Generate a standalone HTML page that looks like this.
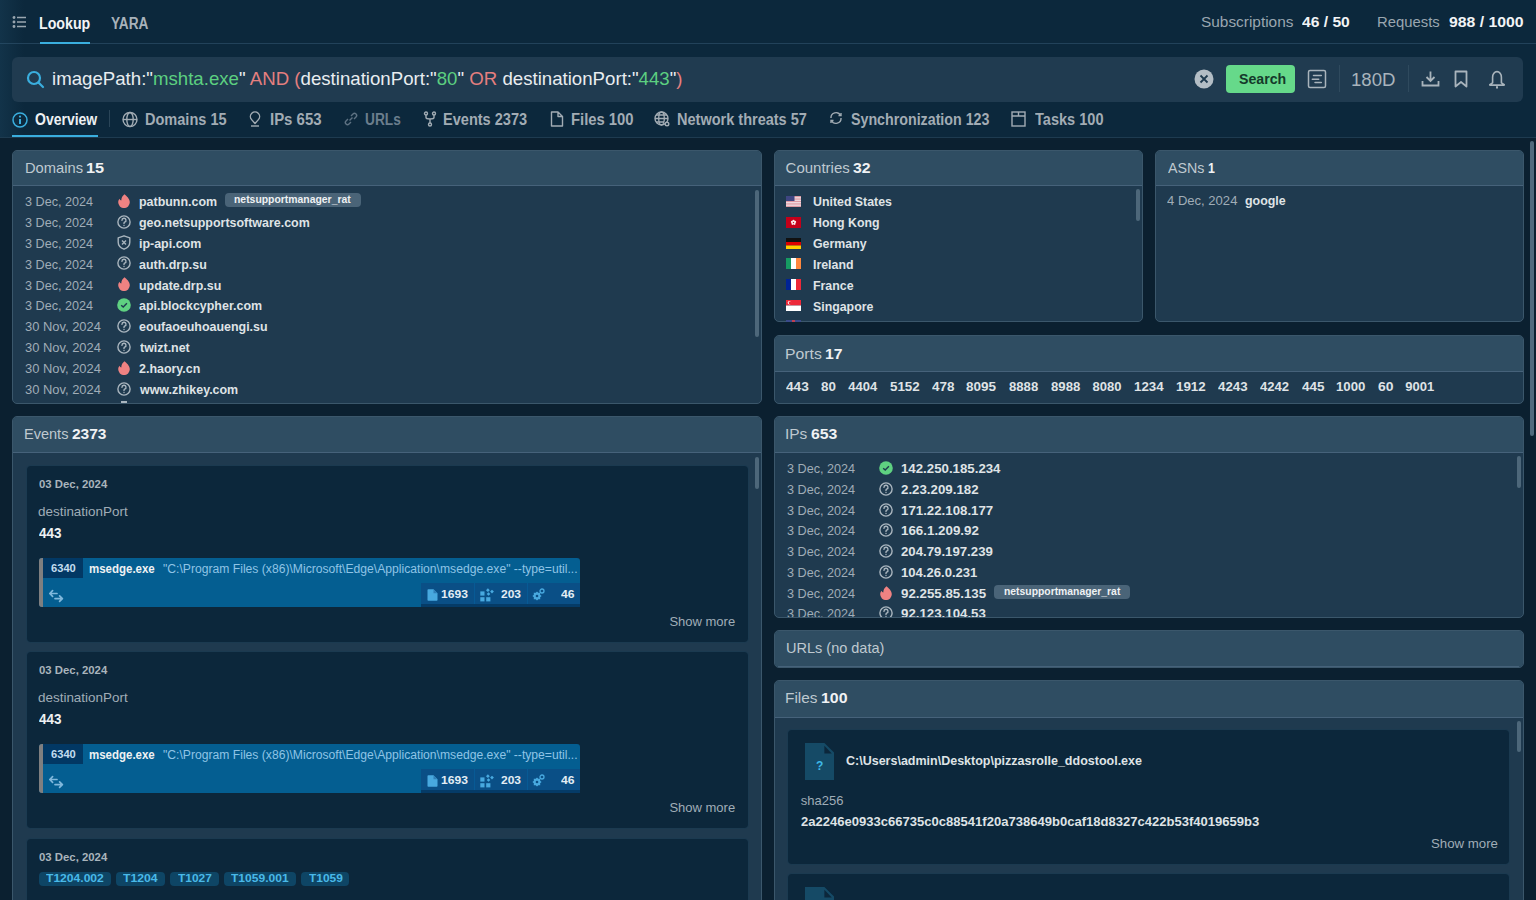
<!DOCTYPE html>
<html><head><meta charset="utf-8"><title>Lookup</title>
<style>
*{box-sizing:border-box;margin:0;padding:0}
html,body{width:1536px;height:900px;overflow:hidden;background:#0b2030;font-family:"Liberation Sans",sans-serif}
.t{position:absolute;white-space:nowrap;transform-origin:0 0}
.b{position:absolute}
.clip{position:absolute;overflow:hidden}
</style></head><body>
<div class="b" style="left:0px;top:0px;width:1536px;height:43px;background:#0c283c;"></div>
<div class="b" style="left:0px;top:43px;width:1536px;height:1px;background:#22425a;"></div>
<div class="b" style="left:0px;top:44px;width:1536px;height:93px;background:#0c283c;"></div>
<div class="b" style="left:0px;top:137px;width:1536px;height:1px;background:#1e3b50;"></div>
<div class="b" style="left:0;top:0;width:24px;height:137px;background:linear-gradient(to right,rgba(40,90,120,0.22),rgba(40,90,120,0))"></div>
<svg class="b" style="left:12px;top:15px" width="16" height="14" viewBox="0 0 16 14" fill="none" stroke="#9aa6b0" stroke-width="1.3"><circle cx="2" cy="2.5" r="0.8" fill="#9aa6b0"/><circle cx="2" cy="7" r="0.8" fill="#9aa6b0"/><circle cx="2" cy="11.5" r="0.8" fill="#9aa6b0"/><path d="M5 2.5H14M5 7H14M5 11.5H14"/></svg>
<div class="t" style="left:38.68px;top:16.10px;font-size:16px;line-height:16px;color:#f2f4f6;font-weight:bold;transform:scaleX(0.8880);">Lookup</div>
<div class="b" style="left:40px;top:42px;width:50px;height:2px;background:#3aaede;"></div>
<div class="t" style="left:110.63px;top:16.10px;font-size:16px;line-height:16px;color:#a8b2ba;font-weight:bold;transform:scaleX(0.8534);">YARA</div>
<div class="t" style="left:1200.61px;top:13.80px;font-size:15px;line-height:15px;color:#9aa6b0;transform:scaleX(1.0262);">Subscriptions</div>
<div class="t" style="left:1302.37px;top:13.80px;font-size:15px;line-height:15px;color:#f2f4f6;font-weight:bold;transform:scaleX(1.0422);">46 / 50</div>
<div class="t" style="left:1376.81px;top:13.80px;font-size:15px;line-height:15px;color:#9aa6b0;transform:scaleX(0.9895);">Requests</div>
<div class="t" style="left:1448.95px;top:13.80px;font-size:15px;line-height:15px;color:#f2f4f6;font-weight:bold;transform:scaleX(1.0523);">988 / 1000</div>
<div class="b" style="left:12px;top:57px;width:1511px;height:45px;background:#203b50;border-radius:6px"></div>
<svg class="b" style="left:26px;top:70px" width="19" height="19" viewBox="0 0 19 19" fill="none" stroke="#3aaede" stroke-width="2.2" stroke-linecap="round"><circle cx="8" cy="8" r="6"/><path d="M12.5 12.5L17 17"/></svg>
<div class="t" style="left:52.29px;top:70.25px;font-size:18.5px;line-height:18.5px;color:#e9edf0;transform:scaleX(1.0079);"><span style="color:#e9edf0">imagePath:&quot;</span><span style="color:#5ccf80">mshta.exe</span><span style="color:#e9edf0">&quot; </span><span style="color:#e57f7f">AND (</span><span style="color:#e9edf0">destinationPort:&quot;</span><span style="color:#5ccf80">80</span><span style="color:#e9edf0">&quot; </span><span style="color:#e57f7f">OR</span><span style="color:#e9edf0"> destinationPort:&quot;</span><span style="color:#5ccf80">443</span><span style="color:#e9edf0">&quot;</span><span style="color:#e57f7f">)</span></div>
<svg class="b" style="left:1194px;top:69px" width="20" height="20" viewBox="0 0 20 20"><circle cx="10" cy="10" r="9.5" fill="#b3bdc5"/><path d="M6.5 6.5L13.5 13.5M13.5 6.5L6.5 13.5" stroke="#1f3a4f" stroke-width="1.8"/></svg>
<div class="b" style="left:1226px;top:65px;width:69px;height:28px;background:#66d98a;border-radius:4px"></div>
<div class="t" style="left:1238.57px;top:71.00px;font-size:15px;line-height:15px;color:#15392a;font-weight:bold;transform:scaleX(0.9450);">Search</div>
<svg class="b" style="left:1307px;top:69px" width="20" height="20" viewBox="0 0 20 20" fill="none" stroke="#a9b4bc" stroke-width="1.5" stroke-linecap="round"><rect x="1.5" y="1.6" width="17" height="17" rx="1.5"/><path d="M6.5 6.6H14.3M5.3 10.2H11.7M8 13.6H14.3"/></svg>
<div class="b" style="left:1339px;top:65px;width:1px;height:27px;background:#2f4a5e;"></div>
<div class="t" style="left:1351.01px;top:70.80px;font-size:18px;line-height:18px;color:#a9b4bc;transform:scaleX(1.0328);">180D</div>
<div class="b" style="left:1408px;top:65px;width:1px;height:27px;background:#2f4a5e;"></div>
<svg class="b" style="left:1421px;top:70px" width="19" height="18" viewBox="0 0 19 18" fill="none" stroke="#a9b4bc" stroke-width="1.8"><path d="M9.5 1.5V11M5.5 7L9.5 11L13.5 7M1.5 11V15.5H17.5V11"/></svg>
<svg class="b" style="left:1454px;top:70px" width="14" height="18" viewBox="0 0 14 18" fill="none" stroke="#a9b4bc" stroke-width="1.8"><path d="M1.5 1.5H12.5V16.5L7 12L1.5 16.5Z" stroke-linejoin="round"/></svg>
<svg class="b" style="left:1488px;top:70px" width="18" height="19" viewBox="0 0 18 19" fill="none" stroke="#a9b4bc" stroke-width="1.6" stroke-linejoin="round"><path d="M4.6 12.8V7.2A4.4 5.6 0 0 1 13.4 7.2V12.8L16.2 14.6V15.1H1.8V14.6Z"/><path d="M8 17.3H10" stroke-width="2.2"/></svg>
<svg class="b" style="left:12px;top:112px" width="16" height="16" viewBox="0 0 16 16" fill="none" stroke="#3aaede" stroke-width="1.5"><circle cx="8" cy="8" r="7"/><path d="M8 7V12" stroke-width="2"/><circle cx="8" cy="4.6" r="1.1" fill="#3aaede" stroke="none"/></svg>
<div class="t" style="left:34.94px;top:111.70px;font-size:16px;line-height:16px;color:#eef1f3;font-weight:bold;transform:scaleX(0.8744);">Overview</div>
<div class="b" style="left:12px;top:135px;width:86px;height:2px;background:#3aaede;"></div>
<div class="b" style="left:109px;top:110px;width:1px;height:17px;background:#2a4558;"></div>
<svg class="b" style="left:122px;top:111px" width="16" height="17" viewBox="0 0 16 17" fill="none" stroke="#a2acb4" stroke-width="1.4"><circle cx="8" cy="8.5" r="7"/><ellipse cx="8" cy="8.5" rx="3.2" ry="7"/><path d="M1 8.5H15"/></svg>
<div class="t" style="left:144.86px;top:111.90px;font-size:16px;line-height:16px;color:#a2acb4;font-weight:bold;transform:scaleX(0.9081);">Domains 15</div>
<svg class="b" style="left:249px;top:111px" width="16" height="17" viewBox="0 0 16 17" fill="none" stroke="#a2acb4" stroke-width="1.4"><path d="M6 12.5L2.6 8.6A4.6 4.6 0 1 1 9.4 8.6Z" stroke-linejoin="round"/><path d="M2 15H10"/></svg>
<div class="t" style="left:269.83px;top:111.90px;font-size:16px;line-height:16px;color:#a2acb4;font-weight:bold;transform:scaleX(0.9342);">IPs 653</div>
<svg class="b" style="left:343px;top:111px" width="16" height="17" viewBox="0 0 16 17" fill="none" stroke="#5e7283" stroke-width="1.4"><path d="M6.5 9.5L9.5 6.5M5 8L3 10A2.1 2.1 0 0 0 6 13L8 11M11 8L13 6A2.1 2.1 0 0 0 10 3L8 5"/></svg>
<div class="t" style="left:364.78px;top:111.90px;font-size:16px;line-height:16px;color:#6b7e8d;font-weight:bold;transform:scaleX(0.8566);">URLs</div>
<svg class="b" style="left:423px;top:111px" width="16" height="17" viewBox="0 0 16 17" fill="none" stroke="#a2acb4" stroke-width="1.4"><circle cx="3" cy="2.5" r="1.5"/><circle cx="11" cy="2.5" r="1.5"/><circle cx="7" cy="13.5" r="1.5"/><path d="M3 4V6.5Q3 8 7 8Q11 8 11 6.5V4M7 8V12"/></svg>
<div class="t" style="left:443.45px;top:111.90px;font-size:16px;line-height:16px;color:#a2acb4;font-weight:bold;transform:scaleX(0.9089);">Events 2373</div>
<svg class="b" style="left:550px;top:111px" width="16" height="17" viewBox="0 0 16 17" fill="none" stroke="#a2acb4" stroke-width="1.4"><path d="M1.5 1H8L12.5 5.5V15H1.5Z M8 1V5.5H12.5" stroke-linejoin="round"/></svg>
<div class="t" style="left:571.04px;top:111.90px;font-size:16px;line-height:16px;color:#a2acb4;font-weight:bold;transform:scaleX(0.9254);">Files 100</div>
<svg class="b" style="left:654px;top:111px" width="16" height="17" viewBox="0 0 16 17" fill="none" stroke="#a2acb4" stroke-width="1.4"><circle cx="7.5" cy="7.5" r="6.5"/><ellipse cx="7.5" cy="7.5" rx="2.8" ry="6.5"/><path d="M1 7.5H14M2 4H13M2 11H10"/><circle cx="13" cy="13" r="1.8" fill="#0c283c"/></svg>
<div class="t" style="left:676.76px;top:111.90px;font-size:16px;line-height:16px;color:#a2acb4;font-weight:bold;transform:scaleX(0.9071);">Network threats 57</div>
<svg class="b" style="left:829px;top:111px" width="16" height="17" viewBox="0 0 16 17" fill="none" stroke="#a2acb4" stroke-width="1.4"><path d="M2 7A5 5 0 0 1 11.5 4.5M12 7A5 5 0 0 1 2.5 9.5"/><path d="M9.5 4.5H12V2M4.5 9.5H2V12"/></svg>
<div class="t" style="left:851.07px;top:111.90px;font-size:16px;line-height:16px;color:#a2acb4;font-weight:bold;transform:scaleX(0.8896);">Synchronization 123</div>
<svg class="b" style="left:1011px;top:111px" width="16" height="17" viewBox="0 0 16 17" fill="none" stroke="#a2acb4" stroke-width="1.4"><rect x="1" y="1" width="13" height="14"/><path d="M1 5H14M7.5 1V5"/></svg>
<div class="t" style="left:1034.65px;top:111.90px;font-size:16px;line-height:16px;color:#a2acb4;font-weight:bold;transform:scaleX(0.9090);">Tasks 100</div>
<div class="b" style="left:12px;top:150px;width:750px;height:254px;background:#1f3a4f;border:1px solid #3b576b;border-radius:5px;overflow:hidden">
<div class="b" style="left:0;top:0;width:748px;height:34px;background:#2f4d62"></div>
<div class="b" style="left:0;top:34px;width:748px;height:1px;background:#46627a"></div>
</div>
<div class="t" style="left:24.52px;top:159.70px;font-size:15px;line-height:15px;color:#bfc9d0;transform:scaleX(0.9800);">Domains</div>
<div class="t" style="left:85.72px;top:159.70px;font-size:15px;line-height:15px;color:#f0f2f4;font-weight:bold;transform:scaleX(1.0862);">15</div>
<div class="clip" style="left:13px;top:186px;width:740px;height:217px">
</div>
<div class="t" style="left:25.10px;top:195.10px;font-size:13px;line-height:13px;color:#a0adb7;transform:scaleX(0.9702);">3 Dec, 2024</div>
<svg class="b" style="left:118.2px;top:193.9px" width="12" height="14" viewBox="0 0 12 14"><path d="M6.5 0.2C8.6 2 11.8 4.6 11.8 8.3A5.8 5.8 0 0 1 0.2 8.3C0.2 6.8 0.8 5.6 1.6 4.8C1.9 5.8 2.6 6.4 3.3 6.4C3.2 3.8 4.6 1.6 6.5 0.2Z" fill="#ef8282"/></svg>
<div class="t" style="left:138.89px;top:195.10px;font-size:13px;line-height:13px;color:#dfe3e6;font-weight:bold;transform:scaleX(0.9570);">patbunn.com</div>
<div class="t" style="left:25.10px;top:215.95px;font-size:13px;line-height:13px;color:#a0adb7;transform:scaleX(0.9702);">3 Dec, 2024</div>
<svg class="b" style="left:117.2px;top:214.8px" width="14" height="14" viewBox="0 0 14 14" fill="none" stroke="#a9b5be" stroke-width="1.4"><circle cx="7" cy="7" r="6.1"/><path d="M5 5.4A2 2 0 1 1 7.6 7.2C7.1 7.5 7 7.8 7 8.6" stroke-linecap="round"/><circle cx="7" cy="10.5" r="0.7" fill="#a9b5be" stroke="none"/></svg>
<div class="t" style="left:139.20px;top:215.95px;font-size:13px;line-height:13px;color:#dfe3e6;font-weight:bold;transform:scaleX(0.9570);">geo.netsupportsoftware.com</div>
<div class="t" style="left:25.10px;top:236.80px;font-size:13px;line-height:13px;color:#a0adb7;transform:scaleX(0.9702);">3 Dec, 2024</div>
<svg class="b" style="left:117.2px;top:235.1px" width="14" height="15" viewBox="0 0 14 15" fill="none" stroke="#a9b5be" stroke-width="1.4"><path d="M7 0.8L12.8 2.8V7.2C12.8 10.6 10.4 12.8 7 14.2C3.6 12.8 1.2 10.6 1.2 7.2V2.8Z" stroke-linejoin="round"/><path d="M5 5.5L9 9.5M9 5.5L5 9.5"/></svg>
<div class="t" style="left:138.83px;top:236.80px;font-size:13px;line-height:13px;color:#dfe3e6;font-weight:bold;transform:scaleX(0.9570);">ip-api.com</div>
<div class="t" style="left:25.10px;top:257.65px;font-size:13px;line-height:13px;color:#a0adb7;transform:scaleX(0.9702);">3 Dec, 2024</div>
<svg class="b" style="left:117.2px;top:256.4px" width="14" height="14" viewBox="0 0 14 14" fill="none" stroke="#a9b5be" stroke-width="1.4"><circle cx="7" cy="7" r="6.1"/><path d="M5 5.4A2 2 0 1 1 7.6 7.2C7.1 7.5 7 7.8 7 8.6" stroke-linecap="round"/><circle cx="7" cy="10.5" r="0.7" fill="#a9b5be" stroke="none"/></svg>
<div class="t" style="left:139.33px;top:257.65px;font-size:13px;line-height:13px;color:#dfe3e6;font-weight:bold;transform:scaleX(0.9570);">auth.drp.su</div>
<div class="t" style="left:25.10px;top:278.50px;font-size:13px;line-height:13px;color:#a0adb7;transform:scaleX(0.9702);">3 Dec, 2024</div>
<svg class="b" style="left:118.2px;top:277.3px" width="12" height="14" viewBox="0 0 12 14"><path d="M6.5 0.2C8.6 2 11.8 4.6 11.8 8.3A5.8 5.8 0 0 1 0.2 8.3C0.2 6.8 0.8 5.6 1.6 4.8C1.9 5.8 2.6 6.4 3.3 6.4C3.2 3.8 4.6 1.6 6.5 0.2Z" fill="#ef8282"/></svg>
<div class="t" style="left:138.95px;top:278.50px;font-size:13px;line-height:13px;color:#dfe3e6;font-weight:bold;transform:scaleX(0.9570);">update.drp.su</div>
<div class="t" style="left:25.10px;top:299.35px;font-size:13px;line-height:13px;color:#a0adb7;transform:scaleX(0.9702);">3 Dec, 2024</div>
<svg class="b" style="left:117.2px;top:298.2px" width="14" height="14" viewBox="0 0 14 14"><circle cx="7" cy="7" r="6.8" fill="#5fd181"/><path d="M4.2 7.2L6.2 9.1L9.9 5.2" fill="none" stroke="#1f3a4f" stroke-width="1.4"/></svg>
<div class="t" style="left:139.33px;top:299.35px;font-size:13px;line-height:13px;color:#dfe3e6;font-weight:bold;transform:scaleX(0.9570);">api.blockcypher.com</div>
<div class="t" style="left:25.08px;top:320.20px;font-size:13px;line-height:13px;color:#a0adb7;transform:scaleX(0.9938);">30 Nov, 2024</div>
<svg class="b" style="left:117.2px;top:319.0px" width="14" height="14" viewBox="0 0 14 14" fill="none" stroke="#a9b5be" stroke-width="1.4"><circle cx="7" cy="7" r="6.1"/><path d="M5 5.4A2 2 0 1 1 7.6 7.2C7.1 7.5 7 7.8 7 8.6" stroke-linecap="round"/><circle cx="7" cy="10.5" r="0.7" fill="#a9b5be" stroke="none"/></svg>
<div class="t" style="left:139.20px;top:320.20px;font-size:13px;line-height:13px;color:#dfe3e6;font-weight:bold;transform:scaleX(0.9570);">eoufaoeuhoauengi.su</div>
<div class="t" style="left:25.08px;top:341.05px;font-size:13px;line-height:13px;color:#a0adb7;transform:scaleX(0.9938);">30 Nov, 2024</div>
<svg class="b" style="left:117.2px;top:339.9px" width="14" height="14" viewBox="0 0 14 14" fill="none" stroke="#a9b5be" stroke-width="1.4"><circle cx="7" cy="7" r="6.1"/><path d="M5 5.4A2 2 0 1 1 7.6 7.2C7.1 7.5 7 7.8 7 8.6" stroke-linecap="round"/><circle cx="7" cy="10.5" r="0.7" fill="#a9b5be" stroke="none"/></svg>
<div class="t" style="left:139.58px;top:341.05px;font-size:13px;line-height:13px;color:#dfe3e6;font-weight:bold;transform:scaleX(0.9570);">twizt.net</div>
<div class="t" style="left:25.08px;top:361.90px;font-size:13px;line-height:13px;color:#a0adb7;transform:scaleX(0.9938);">30 Nov, 2024</div>
<svg class="b" style="left:118.2px;top:360.7px" width="12" height="14" viewBox="0 0 12 14"><path d="M6.5 0.2C8.6 2 11.8 4.6 11.8 8.3A5.8 5.8 0 0 1 0.2 8.3C0.2 6.8 0.8 5.6 1.6 4.8C1.9 5.8 2.6 6.4 3.3 6.4C3.2 3.8 4.6 1.6 6.5 0.2Z" fill="#ef8282"/></svg>
<div class="t" style="left:139.26px;top:361.90px;font-size:13px;line-height:13px;color:#dfe3e6;font-weight:bold;transform:scaleX(0.9570);">2.haory.cn</div>
<div class="t" style="left:25.08px;top:382.75px;font-size:13px;line-height:13px;color:#a0adb7;transform:scaleX(0.9938);">30 Nov, 2024</div>
<svg class="b" style="left:117.2px;top:381.6px" width="14" height="14" viewBox="0 0 14 14" fill="none" stroke="#a9b5be" stroke-width="1.4"><circle cx="7" cy="7" r="6.1"/><path d="M5 5.4A2 2 0 1 1 7.6 7.2C7.1 7.5 7 7.8 7 8.6" stroke-linecap="round"/><circle cx="7" cy="10.5" r="0.7" fill="#a9b5be" stroke="none"/></svg>
<div class="t" style="left:139.76px;top:382.75px;font-size:13px;line-height:13px;color:#dfe3e6;font-weight:bold;transform:scaleX(0.9570);">www.zhikey.com</div>
<div class="b" style="left:224.5px;top:193.4px;width:136.2px;height:13.799999999999983px;background:#4a6478;border-radius:4px"></div>
<div class="t" style="left:233.72px;top:193.75px;font-size:10.5px;line-height:10.5px;color:#eef1f3;font-weight:bold;transform:scaleX(0.9904);">netsupportmanager_rat</div>
<div class="clip" style="left:110px;top:398px;width:30px;height:4px">
</div>
<div class="b" style="left:121px;top:401px;width:6px;height:2px;background:#a9b5be;"></div>
<div class="b" style="left:755px;top:190px;width:4px;height:147px;background:#4d677a;border-radius:2px"></div>
<div class="b" style="left:774px;top:150px;width:369px;height:172px;background:#1f3a4f;border:1px solid #3b576b;border-radius:5px;overflow:hidden">
<div class="b" style="left:0;top:0;width:367px;height:34px;background:#2f4d62"></div>
<div class="b" style="left:0;top:34px;width:367px;height:1px;background:#46627a"></div>
</div>
<div class="t" style="left:785.55px;top:159.70px;font-size:15px;line-height:15px;color:#bfc9d0;">Countries</div>
<div class="t" style="left:853.31px;top:159.70px;font-size:15px;line-height:15px;color:#f0f2f4;font-weight:bold;transform:scaleX(1.0526);">32</div>
<svg class="b" style="left:786px;top:196px" width="15" height="11"><rect width="15" height="11" fill="#f4f0f2"/><rect x="0" y="0.00" width="15" height="0.85" fill="#d88a96"/><rect x="0" y="1.69" width="15" height="0.85" fill="#d88a96"/><rect x="0" y="3.38" width="15" height="0.85" fill="#d88a96"/><rect x="0" y="5.08" width="15" height="0.85" fill="#d88a96"/><rect x="0" y="6.77" width="15" height="0.85" fill="#d88a96"/><rect x="0" y="8.46" width="15" height="0.85" fill="#d88a96"/><rect x="0" y="10.15" width="15" height="0.85" fill="#d88a96"/><rect width="8.5" height="5" fill="#3f4682"/></svg>
<div class="t" style="left:813.06px;top:195.30px;font-size:13px;line-height:13px;color:#dfe3e6;font-weight:bold;transform:scaleX(0.9500);">United States</div>
<svg class="b" style="left:786px;top:217px" width="15" height="11"><rect width="15" height="11" fill="#c4001a"/><circle cx="7.50" cy="3.90" r="1.15" fill="#fbeaea"/><circle cx="9.02" cy="5.01" r="1.15" fill="#fbeaea"/><circle cx="8.44" cy="6.79" r="1.15" fill="#fbeaea"/><circle cx="6.56" cy="6.79" r="1.15" fill="#fbeaea"/><circle cx="5.98" cy="5.01" r="1.15" fill="#fbeaea"/></svg>
<div class="t" style="left:813.00px;top:216.15px;font-size:13px;line-height:13px;color:#dfe3e6;font-weight:bold;transform:scaleX(0.9500);">Hong Kong</div>
<svg class="b" style="left:786px;top:238px" width="15" height="11"><rect width="15" height="4" fill="#111"/><rect y="4" width="15" height="3.5" fill="#dd0000"/><rect y="7.5" width="15" height="3.5" fill="#ffce00"/></svg>
<div class="t" style="left:813.31px;top:237.00px;font-size:13px;line-height:13px;color:#dfe3e6;font-weight:bold;transform:scaleX(0.9500);">Germany</div>
<svg class="b" style="left:786px;top:258px" width="15" height="11"><rect width="5" height="11" fill="#169b62"/><rect x="5" width="5" height="11" fill="#fff"/><rect x="10" width="5" height="11" fill="#ff883e"/></svg>
<div class="t" style="left:813.00px;top:257.85px;font-size:13px;line-height:13px;color:#dfe3e6;font-weight:bold;transform:scaleX(0.9500);">Ireland</div>
<svg class="b" style="left:786px;top:279px" width="15" height="11"><rect width="5" height="11" fill="#002395"/><rect x="5" width="5" height="11" fill="#fff"/><rect x="10" width="5" height="11" fill="#ed2939"/></svg>
<div class="t" style="left:813.00px;top:278.70px;font-size:13px;line-height:13px;color:#dfe3e6;font-weight:bold;transform:scaleX(0.9500);">France</div>
<svg class="b" style="left:786px;top:300px" width="15" height="11"><rect width="15" height="5.5" fill="#ed2939"/><rect y="5.5" width="15" height="5.5" fill="#fff"/><circle cx="3.5" cy="2.8" r="1.8" fill="#fff"/><circle cx="4.3" cy="2.8" r="1.6" fill="#ed2939"/></svg>
<div class="t" style="left:813.43px;top:299.55px;font-size:13px;line-height:13px;color:#dfe3e6;font-weight:bold;transform:scaleX(0.9500);">Singapore</div>
<div class="b" style="left:786px;top:320px;width:15px;height:2px;background:#3a4a8a;"></div>
<div class="b" style="left:792px;top:320px;width:3px;height:2px;background:#c04050;"></div>
<div class="b" style="left:1136px;top:189px;width:4px;height:32px;background:#4d677a;border-radius:2px"></div>
<div class="b" style="left:1155px;top:150px;width:369px;height:172px;background:#1f3a4f;border:1px solid #3b576b;border-radius:5px;overflow:hidden">
<div class="b" style="left:0;top:0;width:367px;height:34px;background:#2f4d62"></div>
<div class="b" style="left:0;top:34px;width:367px;height:1px;background:#46627a"></div>
</div>
<div class="t" style="left:1167.60px;top:159.70px;font-size:15px;line-height:15px;color:#bfc9d0;transform:scaleX(0.9497);">ASNs</div>
<div class="t" style="left:1208.26px;top:159.70px;font-size:15px;line-height:15px;color:#f0f2f4;font-weight:bold;transform:scaleX(0.8227);">1</div>
<div class="t" style="left:1166.74px;top:193.80px;font-size:13px;line-height:13px;color:#a0adb7;transform:scaleX(1.0040);">4 Dec, 2024</div>
<div class="t" style="left:1245.00px;top:194.30px;font-size:13px;line-height:13px;color:#dfe3e6;font-weight:bold;transform:scaleX(0.9543);">google</div>
<div class="b" style="left:774px;top:335px;width:750px;height:69px;background:#1f3a4f;border:1px solid #3b576b;border-radius:5px;overflow:hidden">
<div class="b" style="left:0;top:0;width:748px;height:35px;background:#2f4d62"></div>
<div class="b" style="left:0;top:35px;width:748px;height:1px;background:#46627a"></div>
</div>
<div class="t" style="left:785.24px;top:345.70px;font-size:15px;line-height:15px;color:#bfc9d0;transform:scaleX(1.0511);">Ports</div>
<div class="t" style="left:825.46px;top:345.70px;font-size:15px;line-height:15px;color:#f0f2f4;font-weight:bold;transform:scaleX(1.0495);">17</div>
<div class="t" style="left:786.09px;top:380.30px;font-size:13px;line-height:13px;color:#dfe3e6;font-weight:bold;transform:scaleX(1.0526);">443</div>
<div class="t" style="left:820.80px;top:380.30px;font-size:13px;line-height:13px;color:#dfe3e6;font-weight:bold;transform:scaleX(1.0281);">80</div>
<div class="t" style="left:848.30px;top:380.30px;font-size:13px;line-height:13px;color:#dfe3e6;font-weight:bold;">4404</div>
<div class="t" style="left:890.10px;top:380.30px;font-size:13px;line-height:13px;color:#dfe3e6;font-weight:bold;transform:scaleX(1.0280);">5152</div>
<div class="t" style="left:931.90px;top:380.30px;font-size:13px;line-height:13px;color:#dfe3e6;font-weight:bold;transform:scaleX(1.0351);">478</div>
<div class="t" style="left:966.40px;top:380.30px;font-size:13px;line-height:13px;color:#dfe3e6;font-weight:bold;transform:scaleX(1.0351);">8095</div>
<div class="t" style="left:1008.51px;top:380.30px;font-size:13px;line-height:13px;color:#dfe3e6;font-weight:bold;transform:scaleX(1.0091);">8888</div>
<div class="t" style="left:1050.61px;top:380.30px;font-size:13px;line-height:13px;color:#dfe3e6;font-weight:bold;transform:scaleX(1.0126);">8988</div>
<div class="t" style="left:1092.61px;top:380.30px;font-size:13px;line-height:13px;color:#dfe3e6;font-weight:bold;">8080</div>
<div class="t" style="left:1134.20px;top:380.30px;font-size:13px;line-height:13px;color:#dfe3e6;font-weight:bold;transform:scaleX(1.0256);">1234</div>
<div class="t" style="left:1176.10px;top:380.30px;font-size:13px;line-height:13px;color:#dfe3e6;font-weight:bold;transform:scaleX(1.0281);">1912</div>
<div class="t" style="left:1218.10px;top:380.30px;font-size:13px;line-height:13px;color:#dfe3e6;font-weight:bold;transform:scaleX(1.0221);">4243</div>
<div class="t" style="left:1260.40px;top:380.30px;font-size:13px;line-height:13px;color:#dfe3e6;font-weight:bold;transform:scaleX(1.0067);">4242</div>
<div class="t" style="left:1301.80px;top:380.30px;font-size:13px;line-height:13px;color:#dfe3e6;font-weight:bold;transform:scaleX(1.0367);">445</div>
<div class="t" style="left:1336.41px;top:380.30px;font-size:13px;line-height:13px;color:#dfe3e6;font-weight:bold;transform:scaleX(1.0172);">1000</div>
<div class="t" style="left:1378.11px;top:380.30px;font-size:13px;line-height:13px;color:#dfe3e6;font-weight:bold;transform:scaleX(1.0702);">60</div>
<div class="t" style="left:1405.34px;top:380.30px;font-size:13px;line-height:13px;color:#dfe3e6;font-weight:bold;">9001</div>
<div class="b" style="left:12px;top:416px;width:750px;height:535px;background:#1f3a4f;border:1px solid #3b576b;border-radius:5px;overflow:hidden">
<div class="b" style="left:0;top:0;width:748px;height:35px;background:#2f4d62"></div>
<div class="b" style="left:0;top:35px;width:748px;height:1px;background:#46627a"></div>
</div>
<div class="t" style="left:24.14px;top:426.30px;font-size:15px;line-height:15px;color:#bfc9d0;transform:scaleX(0.9683);">Events</div>
<div class="t" style="left:71.96px;top:426.30px;font-size:15px;line-height:15px;color:#f0f2f4;font-weight:bold;transform:scaleX(1.0333);">2373</div>
<div class="clip" style="left:13px;top:453px;width:749px;height:447px">
</div>
<div class="b" style="left:27px;top:466px;width:721px;height:175.5px;background:#0c273b;border-radius:4px;box-shadow:0 0 0 1px #1b3a50"></div>
<div class="t" style="left:38.55px;top:479.20px;font-size:11px;line-height:11px;color:#a9b4bc;font-weight:bold;transform:scaleX(1.0326);">03 Dec, 2024</div>
<div class="t" style="left:38.46px;top:505.00px;font-size:13px;line-height:13px;color:#a0adb7;transform:scaleX(1.0334);">destinationPort</div>
<div class="t" style="left:38.80px;top:525.50px;font-size:14px;line-height:14px;color:#eef1f3;font-weight:bold;transform:scaleX(0.9642);">443</div>
<div class="b" style="left:39px;top:557.5px;width:541px;height:49.9px;background:#045e91;border-radius:3px 3px 0 3px"></div>
<div class="b" style="left:39px;top:557.5px;width:3.7px;height:49.9px;background:#7f7f80;border-radius:3px 0 0 3px"></div>
<div class="b" style="left:43px;top:557.5px;width:40px;height:20.5px;background:#023864;"></div>
<div class="t" style="left:50.51px;top:562.80px;font-size:11px;line-height:11px;color:#c3ddef;font-weight:bold;transform:scaleX(1.0148);">6340</div>
<div class="t" style="left:89.15px;top:562.50px;font-size:12px;line-height:12px;color:#eef1f3;font-weight:bold;transform:scaleX(0.9570);">msedge.exe</div>
<div class="t" style="left:163.01px;top:563.00px;font-size:12px;line-height:12px;color:#8fc4e6;transform:scaleX(1.0120);">&quot;C:\Program Files (x86)\Microsoft\Edge\Application\msedge.exe&quot; --type=util...</div>
<svg class="b" style="left:48px;top:588.5px" width="17" height="14" viewBox="0 0 17 14" fill="none" stroke="#80b8dc" stroke-width="1.7" stroke-linecap="round" stroke-linejoin="round"><path d="M9 4.5H1.8M4.6 1.7L1.8 4.5L4.6 7.3M7 9.6H14.4M11.6 6.8L14.4 9.6L11.6 12.4"/></svg>
<div class="b" style="left:421px;top:582.6px;width:159px;height:21.6px;background:#0a4f86;"></div>
<div class="b" style="left:421px;top:604.2px;width:159px;height:3.2px;background:#053b67;"></div>
<div class="b" style="left:474px;top:582.6px;width:1px;height:21.6px;background:#075a95;"></div>
<div class="b" style="left:526.5px;top:582.6px;width:1px;height:21.6px;background:#075a95;"></div>
<svg class="b" style="left:427px;top:589.1px" width="11" height="12" viewBox="0 0 11 12"><path d="M0.5 1A0.8 0.8 0 0 1 1.3 0.2H6.5L10.5 4.2V11A0.8 0.8 0 0 1 9.7 11.8H1.3A0.8 0.8 0 0 1 0.5 11Z" fill="#48a9df"/><path d="M6.5 0.2V4.2H10.5" fill="#2f7fb8"/></svg>
<div class="t" style="left:441.17px;top:588.80px;font-size:11px;line-height:11px;color:#e3edf4;font-weight:bold;transform:scaleX(1.1012);">1693</div>
<svg class="b" style="left:479.5px;top:587.6px" width="14" height="14" viewBox="0 0 14 14" fill="#48a9df"><rect x="0.3" y="3.4" width="4.2" height="4.2"/><rect x="0.3" y="9.2" width="4.2" height="4.2"/><rect x="6.2" y="9.2" width="4.2" height="4.2"/><path d="M7.9 0.30000000000000027L9.8 2.2L7.9 4.1L6.0 2.2ZM12 1.7000000000000002L13.9 3.6L12 5.5L10.1 3.6ZM8.5 4.2L10.3 6L8.5 7.8L6.7 6Z"/></svg>
<div class="t" style="left:501.28px;top:588.80px;font-size:11px;line-height:11px;color:#e3edf4;font-weight:bold;transform:scaleX(1.0886);">203</div>
<svg class="b" style="left:532px;top:587.6px" width="13" height="14" viewBox="0 0 13 14"><polygon points="9.60,8.00 8.14,9.30 8.25,11.25 6.30,11.14 5.00,12.60 3.70,11.14 1.75,11.25 1.86,9.30 0.40,8.00 1.86,6.70 1.75,4.75 3.70,4.86 5.00,3.40 6.30,4.86 8.25,4.75 8.14,6.70" fill="#48a9df"/><circle cx="5" cy="8" r="1.3" fill="#0a4f86"/><circle cx="10" cy="3" r="2" fill="none" stroke="#48a9df" stroke-width="1.3"/></svg>
<div class="t" style="left:561.02px;top:588.80px;font-size:11px;line-height:11px;color:#e3edf4;font-weight:bold;transform:scaleX(1.1063);">46</div>
<div class="t" style="left:669.41px;top:614.50px;font-size:13px;line-height:13px;color:#a0adb7;">Show more</div>
<div class="b" style="left:27px;top:652px;width:721px;height:175.5px;background:#0c273b;border-radius:4px;box-shadow:0 0 0 1px #1b3a50"></div>
<div class="t" style="left:38.55px;top:665.20px;font-size:11px;line-height:11px;color:#a9b4bc;font-weight:bold;transform:scaleX(1.0326);">03 Dec, 2024</div>
<div class="t" style="left:38.46px;top:691.00px;font-size:13px;line-height:13px;color:#a0adb7;transform:scaleX(1.0334);">destinationPort</div>
<div class="t" style="left:38.80px;top:711.50px;font-size:14px;line-height:14px;color:#eef1f3;font-weight:bold;transform:scaleX(0.9642);">443</div>
<div class="b" style="left:39px;top:743.5px;width:541px;height:49.9px;background:#045e91;border-radius:3px 3px 0 3px"></div>
<div class="b" style="left:39px;top:743.5px;width:3.7px;height:49.9px;background:#7f7f80;border-radius:3px 0 0 3px"></div>
<div class="b" style="left:43px;top:743.5px;width:40px;height:20.5px;background:#023864;"></div>
<div class="t" style="left:50.51px;top:748.80px;font-size:11px;line-height:11px;color:#c3ddef;font-weight:bold;transform:scaleX(1.0148);">6340</div>
<div class="t" style="left:89.15px;top:748.50px;font-size:12px;line-height:12px;color:#eef1f3;font-weight:bold;transform:scaleX(0.9570);">msedge.exe</div>
<div class="t" style="left:163.01px;top:749.00px;font-size:12px;line-height:12px;color:#8fc4e6;transform:scaleX(1.0120);">&quot;C:\Program Files (x86)\Microsoft\Edge\Application\msedge.exe&quot; --type=util...</div>
<svg class="b" style="left:48px;top:774.5px" width="17" height="14" viewBox="0 0 17 14" fill="none" stroke="#80b8dc" stroke-width="1.7" stroke-linecap="round" stroke-linejoin="round"><path d="M9 4.5H1.8M4.6 1.7L1.8 4.5L4.6 7.3M7 9.6H14.4M11.6 6.8L14.4 9.6L11.6 12.4"/></svg>
<div class="b" style="left:421px;top:768.6px;width:159px;height:21.6px;background:#0a4f86;"></div>
<div class="b" style="left:421px;top:790.2px;width:159px;height:3.2px;background:#053b67;"></div>
<div class="b" style="left:474px;top:768.6px;width:1px;height:21.6px;background:#075a95;"></div>
<div class="b" style="left:526.5px;top:768.6px;width:1px;height:21.6px;background:#075a95;"></div>
<svg class="b" style="left:427px;top:775.1px" width="11" height="12" viewBox="0 0 11 12"><path d="M0.5 1A0.8 0.8 0 0 1 1.3 0.2H6.5L10.5 4.2V11A0.8 0.8 0 0 1 9.7 11.8H1.3A0.8 0.8 0 0 1 0.5 11Z" fill="#48a9df"/><path d="M6.5 0.2V4.2H10.5" fill="#2f7fb8"/></svg>
<div class="t" style="left:441.17px;top:774.80px;font-size:11px;line-height:11px;color:#e3edf4;font-weight:bold;transform:scaleX(1.1012);">1693</div>
<svg class="b" style="left:479.5px;top:773.6px" width="14" height="14" viewBox="0 0 14 14" fill="#48a9df"><rect x="0.3" y="3.4" width="4.2" height="4.2"/><rect x="0.3" y="9.2" width="4.2" height="4.2"/><rect x="6.2" y="9.2" width="4.2" height="4.2"/><path d="M7.9 0.30000000000000027L9.8 2.2L7.9 4.1L6.0 2.2ZM12 1.7000000000000002L13.9 3.6L12 5.5L10.1 3.6ZM8.5 4.2L10.3 6L8.5 7.8L6.7 6Z"/></svg>
<div class="t" style="left:501.28px;top:774.80px;font-size:11px;line-height:11px;color:#e3edf4;font-weight:bold;transform:scaleX(1.0886);">203</div>
<svg class="b" style="left:532px;top:773.6px" width="13" height="14" viewBox="0 0 13 14"><polygon points="9.60,8.00 8.14,9.30 8.25,11.25 6.30,11.14 5.00,12.60 3.70,11.14 1.75,11.25 1.86,9.30 0.40,8.00 1.86,6.70 1.75,4.75 3.70,4.86 5.00,3.40 6.30,4.86 8.25,4.75 8.14,6.70" fill="#48a9df"/><circle cx="5" cy="8" r="1.3" fill="#0a4f86"/><circle cx="10" cy="3" r="2" fill="none" stroke="#48a9df" stroke-width="1.3"/></svg>
<div class="t" style="left:561.02px;top:774.80px;font-size:11px;line-height:11px;color:#e3edf4;font-weight:bold;transform:scaleX(1.1063);">46</div>
<div class="t" style="left:669.41px;top:800.50px;font-size:13px;line-height:13px;color:#a0adb7;">Show more</div>
<div class="b" style="left:27px;top:839px;width:721px;height:175.5px;background:#0c273b;border-radius:4px;box-shadow:0 0 0 1px #1b3a50"></div>
<div class="t" style="left:38.55px;top:852.20px;font-size:11px;line-height:11px;color:#a9b4bc;font-weight:bold;transform:scaleX(1.0326);">03 Dec, 2024</div>
<div class="b" style="left:39px;top:872px;width:72.2px;height:13.5px;background:#0e4565;border-radius:4px"></div>
<div class="t" style="left:46.38px;top:873.05px;font-size:10.5px;line-height:10.5px;color:#49b9e8;font-weight:bold;transform:scaleX(1.1517);">T1204.002</div>
<div class="b" style="left:116.1px;top:872px;width:49.400000000000006px;height:13.5px;background:#0e4565;border-radius:4px"></div>
<div class="t" style="left:123.48px;top:873.05px;font-size:10.5px;line-height:10.5px;color:#49b9e8;font-weight:bold;transform:scaleX(1.1618);">T1204</div>
<div class="b" style="left:170.4px;top:872px;width:48.19999999999999px;height:13.5px;background:#0e4565;border-radius:4px"></div>
<div class="t" style="left:177.78px;top:873.05px;font-size:10.5px;line-height:10.5px;color:#49b9e8;font-weight:bold;transform:scaleX(1.1353);">T1027</div>
<div class="b" style="left:223.8px;top:872px;width:72.19999999999999px;height:13.5px;background:#0e4565;border-radius:4px"></div>
<div class="t" style="left:231.18px;top:873.05px;font-size:10.5px;line-height:10.5px;color:#49b9e8;font-weight:bold;transform:scaleX(1.1481);">T1059.001</div>
<div class="b" style="left:301.2px;top:872px;width:48.30000000000001px;height:13.5px;background:#0e4565;border-radius:4px"></div>
<div class="t" style="left:308.58px;top:873.05px;font-size:10.5px;line-height:10.5px;color:#49b9e8;font-weight:bold;transform:scaleX(1.1367);">T1059</div>
<div class="b" style="left:755px;top:457px;width:4px;height:32px;background:#4d677a;border-radius:2px"></div>
<div class="b" style="left:774px;top:416px;width:750px;height:202px;background:#1f3a4f;border:1px solid #3b576b;border-radius:5px;overflow:hidden">
<div class="b" style="left:0;top:0;width:748px;height:35px;background:#2f4d62"></div>
<div class="b" style="left:0;top:35px;width:748px;height:1px;background:#46627a"></div>
</div>
<div class="t" style="left:785.11px;top:426.40px;font-size:15px;line-height:15px;color:#bfc9d0;transform:scaleX(1.0303);">IPs</div>
<div class="t" style="left:810.85px;top:426.40px;font-size:15px;line-height:15px;color:#f0f2f4;font-weight:bold;transform:scaleX(1.0533);">653</div>
<div class="clip" style="left:775px;top:453px;width:740px;height:163.5px">
<div class="t" style="left:11.70px;top:9.00px;font-size:13px;line-height:13px;color:#a0adb7;transform:scaleX(0.9702);">3 Dec, 2024</div>
<svg class="b" style="left:103.7px;top:8.0px" width="14" height="14" viewBox="0 0 14 14"><circle cx="7" cy="7" r="6.8" fill="#5fd181"/><path d="M4.2 7.2L6.2 9.1L9.9 5.2" fill="none" stroke="#1f3a4f" stroke-width="1.4"/></svg>
<div class="t" style="left:125.70px;top:9.00px;font-size:13px;line-height:13px;color:#dfe3e6;font-weight:bold;transform:scaleX(1.0194);">142.250.185.234</div>
<div class="t" style="left:11.70px;top:29.77px;font-size:13px;line-height:13px;color:#a0adb7;transform:scaleX(0.9702);">3 Dec, 2024</div>
<svg class="b" style="left:103.7px;top:28.8px" width="14" height="14" viewBox="0 0 14 14" fill="none" stroke="#a9b5be" stroke-width="1.4"><circle cx="7" cy="7" r="6.1"/><path d="M5 5.4A2 2 0 1 1 7.6 7.2C7.1 7.5 7 7.8 7 8.6" stroke-linecap="round"/><circle cx="7" cy="10.5" r="0.7" fill="#a9b5be" stroke="none"/></svg>
<div class="t" style="left:126.03px;top:29.77px;font-size:13px;line-height:13px;color:#dfe3e6;font-weight:bold;transform:scaleX(1.0221);">2.23.209.182</div>
<div class="t" style="left:11.70px;top:50.54px;font-size:13px;line-height:13px;color:#a0adb7;transform:scaleX(0.9702);">3 Dec, 2024</div>
<svg class="b" style="left:103.7px;top:49.5px" width="14" height="14" viewBox="0 0 14 14" fill="none" stroke="#a9b5be" stroke-width="1.4"><circle cx="7" cy="7" r="6.1"/><path d="M5 5.4A2 2 0 1 1 7.6 7.2C7.1 7.5 7 7.8 7 8.6" stroke-linecap="round"/><circle cx="7" cy="10.5" r="0.7" fill="#a9b5be" stroke="none"/></svg>
<div class="t" style="left:125.70px;top:50.54px;font-size:13px;line-height:13px;color:#dfe3e6;font-weight:bold;transform:scaleX(1.0208);">171.22.108.177</div>
<div class="t" style="left:11.70px;top:71.31px;font-size:13px;line-height:13px;color:#a0adb7;transform:scaleX(0.9702);">3 Dec, 2024</div>
<svg class="b" style="left:103.7px;top:70.3px" width="14" height="14" viewBox="0 0 14 14" fill="none" stroke="#a9b5be" stroke-width="1.4"><circle cx="7" cy="7" r="6.1"/><path d="M5 5.4A2 2 0 1 1 7.6 7.2C7.1 7.5 7 7.8 7 8.6" stroke-linecap="round"/><circle cx="7" cy="10.5" r="0.7" fill="#a9b5be" stroke="none"/></svg>
<div class="t" style="left:125.70px;top:71.31px;font-size:13px;line-height:13px;color:#dfe3e6;font-weight:bold;transform:scaleX(1.0265);">166.1.209.92</div>
<div class="t" style="left:11.70px;top:92.08px;font-size:13px;line-height:13px;color:#a0adb7;transform:scaleX(0.9702);">3 Dec, 2024</div>
<svg class="b" style="left:103.7px;top:91.1px" width="14" height="14" viewBox="0 0 14 14" fill="none" stroke="#a9b5be" stroke-width="1.4"><circle cx="7" cy="7" r="6.1"/><path d="M5 5.4A2 2 0 1 1 7.6 7.2C7.1 7.5 7 7.8 7 8.6" stroke-linecap="round"/><circle cx="7" cy="10.5" r="0.7" fill="#a9b5be" stroke="none"/></svg>
<div class="t" style="left:126.04px;top:92.08px;font-size:13px;line-height:13px;color:#dfe3e6;font-weight:bold;transform:scaleX(1.0163);">204.79.197.239</div>
<div class="t" style="left:11.70px;top:112.85px;font-size:13px;line-height:13px;color:#a0adb7;transform:scaleX(0.9702);">3 Dec, 2024</div>
<svg class="b" style="left:103.7px;top:111.9px" width="14" height="14" viewBox="0 0 14 14" fill="none" stroke="#a9b5be" stroke-width="1.4"><circle cx="7" cy="7" r="6.1"/><path d="M5 5.4A2 2 0 1 1 7.6 7.2C7.1 7.5 7 7.8 7 8.6" stroke-linecap="round"/><circle cx="7" cy="10.5" r="0.7" fill="#a9b5be" stroke="none"/></svg>
<div class="t" style="left:125.71px;top:112.85px;font-size:13px;line-height:13px;color:#dfe3e6;font-weight:bold;transform:scaleX(1.0065);">104.26.0.231</div>
<div class="t" style="left:11.70px;top:133.62px;font-size:13px;line-height:13px;color:#a0adb7;transform:scaleX(0.9702);">3 Dec, 2024</div>
<svg class="b" style="left:104.7px;top:132.6px" width="12" height="14" viewBox="0 0 12 14"><path d="M6.5 0.2C8.6 2 11.8 4.6 11.8 8.3A5.8 5.8 0 0 1 0.2 8.3C0.2 6.8 0.8 5.6 1.6 4.8C1.9 5.8 2.6 6.4 3.3 6.4C3.2 3.8 4.6 1.6 6.5 0.2Z" fill="#ef8282"/></svg>
<div class="t" style="left:126.03px;top:133.62px;font-size:13px;line-height:13px;color:#dfe3e6;font-weight:bold;transform:scaleX(1.0236);">92.255.85.135</div>
<div class="t" style="left:11.70px;top:154.39px;font-size:13px;line-height:13px;color:#a0adb7;transform:scaleX(0.9702);">3 Dec, 2024</div>
<svg class="b" style="left:103.7px;top:153.4px" width="14" height="14" viewBox="0 0 14 14" fill="none" stroke="#a9b5be" stroke-width="1.4"><circle cx="7" cy="7" r="6.1"/><path d="M5 5.4A2 2 0 1 1 7.6 7.2C7.1 7.5 7 7.8 7 8.6" stroke-linecap="round"/><circle cx="7" cy="10.5" r="0.7" fill="#a9b5be" stroke="none"/></svg>
<div class="t" style="left:126.04px;top:154.39px;font-size:13px;line-height:13px;color:#dfe3e6;font-weight:bold;transform:scaleX(1.0204);">92.123.104.53</div>
</div>
<div class="b" style="left:994.4px;top:585px;width:135.60000000000002px;height:14.200000000000045px;background:#4a6478;border-radius:4px"></div>
<div class="t" style="left:1003.83px;top:585.75px;font-size:10.5px;line-height:10.5px;color:#eef1f3;font-weight:bold;transform:scaleX(0.9870);">netsupportmanager_rat</div>
<div class="b" style="left:1517px;top:456px;width:4px;height:32px;background:#4d677a;border-radius:2px"></div>
<div class="b" style="left:774px;top:630px;width:750px;height:38px;background:#1f3a4f;border:1px solid #3b576b;border-radius:5px;overflow:hidden">
<div class="b" style="left:0;top:0;width:748px;height:37px;background:#2f4d62"></div>
</div>
<div class="t" style="left:785.61px;top:640.30px;font-size:15px;line-height:15px;color:#bfc9d0;transform:scaleX(0.9671);">URLs (no data)</div>
<div class="b" style="left:778px;top:666px;width:741px;height:1px;background:#46627a;"></div>
<div class="b" style="left:774px;top:680px;width:750px;height:271px;background:#1f3a4f;border:1px solid #3b576b;border-radius:5px;overflow:hidden">
<div class="b" style="left:0;top:0;width:748px;height:36px;background:#2f4d62"></div>
<div class="b" style="left:0;top:36px;width:748px;height:1px;background:#46627a"></div>
</div>
<div class="t" style="left:785.37px;top:690.30px;font-size:15px;line-height:15px;color:#bfc9d0;transform:scaleX(1.0259);">Files</div>
<div class="t" style="left:820.95px;top:690.30px;font-size:15px;line-height:15px;color:#f0f2f4;font-weight:bold;transform:scaleX(1.0564);">100</div>
<div class="b" style="left:788px;top:730px;width:721px;height:133.5px;background:#0c273b;border-radius:4px;box-shadow:0 0 0 1px #1b3a50"></div>
<svg class="b" style="left:805px;top:742.8px" width="29" height="37" viewBox="0 0 29 37"><path d="M0 0H19.4L29 9.6V37H0Z" fill="#154a66"/><path d="M19.4 2.8V10.6H26.8Z" fill="#0c273b"/></svg>
<div class="t" style="left:816.16px;top:760.00px;font-size:12px;line-height:12px;color:#3eb8e6;font-weight:bold;transform:scaleX(0.9967);">?</div>
<div class="t" style="left:846.20px;top:754.30px;font-size:13px;line-height:13px;color:#dfe3e6;font-weight:bold;transform:scaleX(0.9617);">C:\Users\admin\Desktop\pizzasrolle_ddostool.exe</div>
<div class="t" style="left:800.81px;top:794.00px;font-size:13px;line-height:13px;color:#a0adb7;">sha256</div>
<div class="t" style="left:800.74px;top:814.90px;font-size:13px;line-height:13px;color:#dfe3e6;font-weight:bold;transform:scaleX(1.0031);">2a2246e0933c66735c0c88541f20a738649b0caf18d8327c422b53f4019659b3</div>
<div class="t" style="left:1430.60px;top:837.20px;font-size:13px;line-height:13px;color:#a0adb7;transform:scaleX(1.0179);">Show more</div>
<div class="b" style="left:788px;top:873.7px;width:721px;height:40px;background:#0c273b;border-radius:4px;box-shadow:0 0 0 1px #1b3a50"></div>
<svg class="b" style="left:805px;top:886.5px" width="29" height="20" viewBox="0 0 29 20"><path d="M0 0H19.4L29 9.6V20H0Z" fill="#154a66"/><path d="M19.4 2.8V10.6H26.8Z" fill="#0c273b"/></svg>
<div class="b" style="left:1517px;top:721px;width:4px;height:31px;background:#4d677a;border-radius:2px"></div>
<div class="b" style="left:1530px;top:141px;width:4px;height:295px;background:#506a7d;border-radius:2px"></div>
</body></html>
